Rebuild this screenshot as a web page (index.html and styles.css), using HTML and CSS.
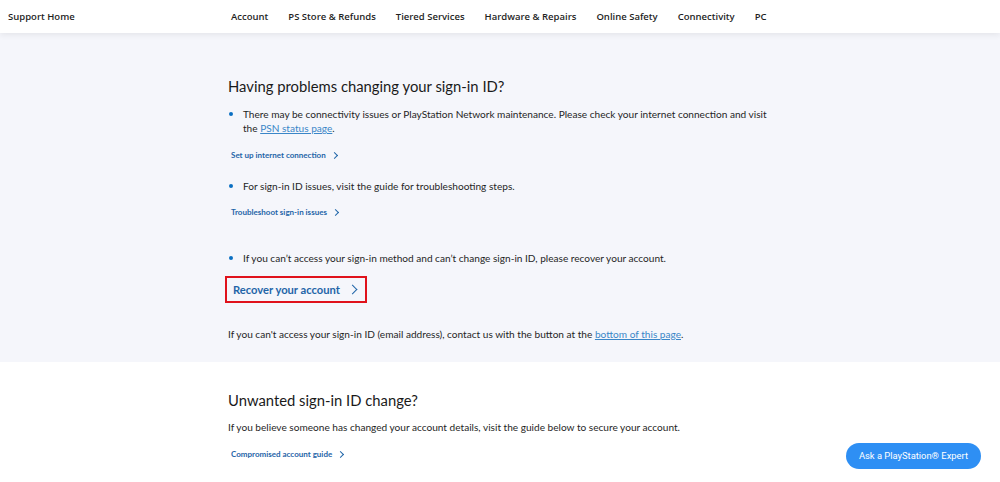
FILE: index.html
```html
<!DOCTYPE html>
<html lang="en">
<head>
  <meta charset="UTF-8" />
  <meta name="viewport" content="width=device-width, initial-scale=1.0"/>
  <title>Sign-in ID help</title>
  <link rel="stylesheet" href="styles.css">
</head>
<body>

  <!-- Top navigation -->
  <header class="topbar">
    <a class="home" href="#">Support Home</a>
    <nav class="nav">
      <a href="#">Account</a>
      <a href="#">PS Store &amp; Refunds</a>
      <a href="#">Tiered Services</a>
      <a href="#">Hardware &amp; Repairs</a>
      <a href="#">Online Safety</a>
      <a href="#">Connectivity</a>
      <a href="#">PC</a>
    </nav>
  </header>

  <!-- Problems changing sign-in ID -->
  <section class="band grey">
    <h2>Having problems changing your sign-in ID?</h2>

    <ul class="bullets">
      <li>There may be connectivity issues or PlayStation Network maintenance. Please check your internet connection and visit the <a class="inline" href="#">PSN status page</a>.</li>
    </ul>
    <a class="cta first" href="#">Set up internet connection <span class="chev"></span></a>

    <ul class="bullets second">
      <li>For sign-in ID issues, visit the guide for troubleshooting steps.</li>
    </ul>
    <a class="cta" href="#">Troubleshoot sign-in issues <span class="chev"></span></a>

    <ul class="bullets third">
      <li>If you can’t access your sign-in method and can’t change sign-in ID, please recover your account.</li>
    </ul>
    <div class="highlight">
      <a class="cta big" href="#">Recover your account <span class="chev"></span></a>
    </div>

    <p class="note contact">If you can't access your sign-in ID (email address), contact us with the button at the <a class="inline" href="#">bottom of this page</a>.</p>
  </section>

  <!-- Unwanted change -->
  <section class="band white">
    <h2>Unwanted sign-in ID change?</h2>
    <p class="note">If you believe someone has changed your account details, visit the guide below to secure your account.</p>
    <a class="cta first" href="#">Compromised account guide <span class="chev"></span></a>
  </section>

  <a class="expert" href="#">Ask a PlayStation® Expert</a>

</body>
</html>
```

FILE: styles.css
```css
* {
  box-sizing: border-box;
  margin: 0;
  padding: 0;
}

body {
  font-family: Lato, "Open Sans", sans-serif;
  background: #fff;
  color: #1f1f1f;
  overflow: hidden;
  height: 482px;
}

a {
  text-decoration: none;
}

.topbar {
  position: relative;
  z-index: 2;
  display: flex;
  align-items: center;
  height: 33px;
  padding: 0 0 1px 8px;
  background: #fff;
  box-shadow: 0 2px 6px rgba(0,0,0,0.07);
}

.topbar a {
  font-family: "Open Sans", sans-serif;
  color: #1f1f1f;
  font-size: 9.5px;
  font-weight: 600;
}

.home {
  width: 223px;
}

.nav {
  display: flex;
  gap: 20px;
}

.band {
  padding-left: 228px;
}

.band.grey {
  background: #f5f6fb;
  height: 329px;
  padding-top: 43px;
}

.band.white {
  padding-top: 28px;
}

h2 {
  font-size: 14.8px;
  line-height: 20px;
  font-weight: 400;
  color: #1a1a1a;
  margin-bottom: 11px;
}

.bullets {
  list-style: none;
  width: 548px;
  font-size: 10.1px;
  line-height: 14px;
  color: #1f1f1f;
}

.bullets li {
  position: relative;
  padding-left: 15px;
}

.bullets li::before {
  content: "";
  position: absolute;
  left: 1px;
  top: 5px;
  width: 4px;
  height: 4px;
  border-radius: 50%;
  background: #0a6fc2;
}

.bullets.second {
  margin-top: 19px;
}

.bullets.third {
  margin-top: 34px;
}

.inline {
  color: #3a86c8;
  text-decoration: underline;
}

.cta {
  display: flex;
  width: max-content;
  align-items: center;
  gap: 6px;
  height: 10px;
  margin: 14px 0 0 3px;
  font-size: 8px;
  font-weight: 700;
  color: #1f65a8;
}

.cta.first {
  margin-top: 15px;
}

.chev {
  width: 5px;
  height: 5px;
  border-right: 1.2px solid #1f65a8;
  border-top: 1.2px solid #1f65a8;
  transform: rotate(45deg);
}

.highlight {
  width: 142px;
  height: 27px;
  margin: 11px 0 0 -3px;
  padding: 6px 0 0 6px;
  border: 2.5px solid #e0121b;
}

.highlight .cta {
  margin: 0;
}

.cta.big {
  font-size: 11.2px;
  gap: 9px;
}

.cta.big .chev {
  width: 7px;
  height: 7px;
}

.note {
  font-size: 10.1px;
  line-height: 14px;
  color: #1f1f1f;
}

.note.contact {
  margin-top: 24px;
}

.white h2 {
  margin-bottom: 10px;
}

.expert {
  position: fixed;
  right: 19px;
  bottom: 13px;
  padding: 7px 13px;
  border-radius: 14px;
  background: #2e8ff4;
  color: #fff;
  font-family: Roboto, sans-serif;
  font-size: 9.4px;
  line-height: 12px;
}
```
